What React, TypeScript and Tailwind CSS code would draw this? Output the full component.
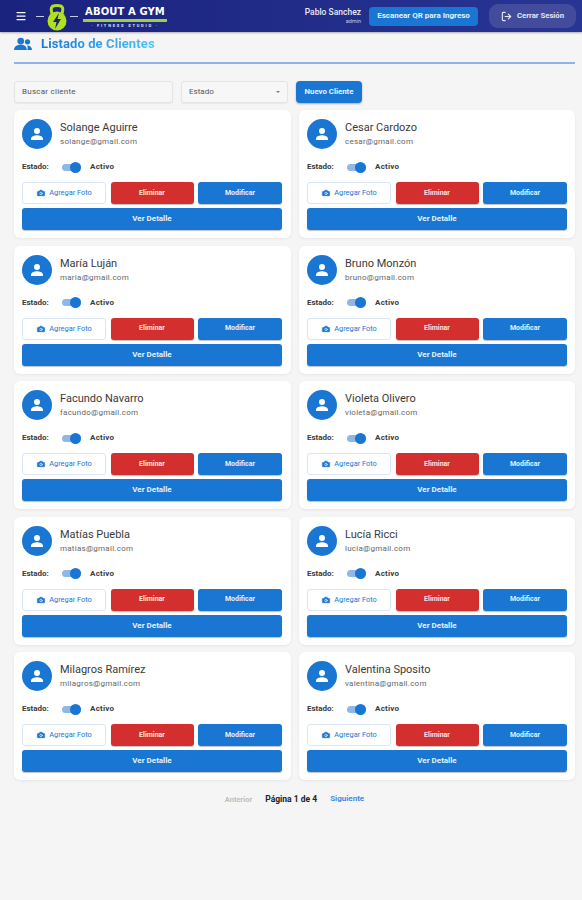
import { Camera, LogOut, Menu } from 'lucide-react';

const clients = [
  ['Solange Aguirre', 'solange@gmail.com'],
  ['Cesar Cardozo', 'cesar@gmail.com'],
  ['María Luján', 'maria@gmail.com'],
  ['Bruno Monzón', 'bruno@gmail.com'],
  ['Facundo Navarro', 'facundo@gmail.com'],
  ['Violeta Olivero', 'violeta@gmail.com'],
  ['Matías Puebla', 'matias@gmail.com'],
  ['Lucía Ricci', 'lucia@gmail.com'],
  ['Milagros Ramírez', 'milagros@gmail.com'],
  ['Valentina Sposito', 'valentina@gmail.com'],
];

function Logo() {
  return (
    <div className="flex items-center ml-[9px]">
      <span className="w-[8px] h-px bg-[#c5cae9] mr-[3px]" />
      <svg width="20" height="27" viewBox="0 0 20 27" className="mt-[3px]">
        <path d="M5.5 11 C2.500 3 5 1.500 10 1.500 C15 1.500 17.500 3 14.500 11" fill="none" stroke="#b2e01f" strokeWidth="3" />
        <circle cx="10" cy="17" r="9.500" fill="#b2e01f" />
        <path d="M12 9 L6 18 H9.500 L8 25 L14 15 H10.500 Z" fill="#1a237e" />
      </svg>
      <span className="w-[8px] h-px bg-[#c5cae9] ml-[3px]" />
      <div className="ml-[5px] mt-[3px] flex flex-col items-center w-[84px]">
        <span className="font-['DejaVu_Sans',sans-serif] text-[10px] leading-[12px] font-bold text-white tracking-[0.1px] whitespace-nowrap">ABOUT A GYM</span>
        <span className="w-full h-[3px] bg-[#a5cf3a] mt-[1px]" />
        <span className="text-[4px] leading-[7px] font-bold text-[#dfe3f5] tracking-[1.8px] whitespace-nowrap">· FITNESS STUDIO ·</span>
      </div>
    </div>
  );
}

function Header() {
  return (
    <header className="h-[32px] flex items-center bg-gradient-to-r from-[#1a237e] to-[#283593] pl-[15px] pr-[6px] shadow-[0_1px_2px_rgba(0,0,0,0.3)]">
      <Menu size={12} strokeWidth={2.5} className="text-white" />
      <Logo />
      <div className="ml-auto flex items-center">
        <div className="flex flex-col items-end mr-[8px]">
          <span className="text-[8.500px] leading-[10px] font-medium text-[#e8eaf6]">Pablo Sanchez</span>
          <span className="text-[5.500px] leading-[9px] text-[#c5cae9]">admin</span>
        </div>
        <button className="h-[19px] w-[109px] rounded-[4px] bg-[#1976d2] text-[8px] font-bold text-[#e3f2fd]">Escanear QR para Ingreso</button>
        <button className="ml-[11px] h-[24px] w-[87px] rounded-[9px] bg-[#434c9c] flex items-center justify-center gap-[5px] text-[7.700px] font-bold text-[#e3e6f5]">
          <LogOut size={11} strokeWidth={2.5} />
          Cerrar Sesión
        </button>
      </div>
    </header>
  );
}

function Toolbar() {
  return (
    <div className="flex items-center gap-[8px] mt-[17px]">
      <div className="w-[159px] h-[22px] rounded-[3px] border border-[#e4e4e4] bg-[#f7f7f7] flex items-center px-[7px] text-[8px] tracking-[0.25px] text-[#555] shadow-[0_1px_1px_rgba(0,0,0,0.05)]">
        Buscar cliente
      </div>
      <div className="w-[107px] h-[22px] rounded-[3px] border border-[#e4e4e4] bg-[#f7f7f7] flex items-center justify-between px-[7px] text-[8px] text-[#555] shadow-[0_1px_1px_rgba(0,0,0,0.05)]">
        Estado
        <span className="w-0 h-0 border-x-[2px] border-x-transparent border-t-[2px] border-t-[#777]" />
      </div>
      <button className="w-[66px] h-[22px] rounded-[4px] bg-[#1976d2] text-[7.800px] font-bold text-[#e3f2fd] shadow-[0_1px_2px_rgba(0,0,0,0.3)]">Nuevo Cliente</button>
    </div>
  );
}

function ClientCard({ name, email }: { name: string; email: string }) {
  return (
    <div className="h-[128px] rounded-[6px] bg-white px-[8px] pt-[9px] shadow-[0_1px_3px_rgba(0,0,0,0.07)]">
      <div className="flex items-center h-[30px]">
        <div className="w-[30px] h-[30px] rounded-full bg-[#1976d2] flex items-center justify-center">
          <svg width="16" height="16" viewBox="0 0 24 24" fill="#ffffff">
            <path d="M12 12a4.500 4.500 0 1 0 0-9 4.500 4.500 0 0 0 0 9Zm0 2c-3.300 0-9 1.700-9 5v2h18v-2c0-3.300-5.700-5-9-5Z" />
          </svg>
        </div>
        <div className="ml-[8px] flex flex-col pt-[1px]">
          <span className="text-[11px] leading-[14px] text-[#3a3a3a]">{name}</span>
          <span className="text-[8px] leading-[12px] mt-[1px] tracking-[0.25px] text-[#666]">{email}</span>
        </div>
      </div>
      <div className="flex items-center h-[14px] mt-[11px] font-bold text-[#3a3a3a]">
        <span className="w-[40px] text-[8px]">Estado:</span>
        <span className="relative w-[19px] h-[7px] rounded-full bg-[#8fb8e6]">
          <span className="absolute right-0 top-[-2px] w-[11px] h-[11px] rounded-full bg-[#1976d2]" />
        </span>
        <span className="ml-[9px] text-[8px] tracking-[0.25px]">Activo</span>
      </div>
      <div className="grid grid-cols-[84px_83px_84px] gap-x-[4.500px] mt-[8px]">
        <button className="h-[22px] rounded-[3px] border border-[#dbe6f5] bg-white flex items-center justify-center gap-[3px] text-[7.400px] text-[#1976d2]">
          <Camera size={10} fill="#1976d2" stroke="#ffffff" strokeWidth={1.5} />
          Agregar Foto
        </button>
        <button className="h-[22px] rounded-[3px] bg-[#d32f2f] text-[7px] font-bold text-[#fbe3e3] shadow-[0_1px_1px_rgba(0,0,0,0.25)]">Eliminar</button>
        <button className="h-[22px] rounded-[3px] bg-[#1976d2] text-[7px] font-bold text-[#e3f2fd] shadow-[0_1px_1px_rgba(0,0,0,0.25)]">Modificar</button>
      </div>
      <button className="w-[260px] h-[22px] mt-[4px] rounded-[3px] bg-[#1976d2] text-[8px] font-bold text-[#e3f2fd] shadow-[0_1px_1px_rgba(0,0,0,0.25)]">Ver Detalle</button>
    </div>
  );
}

export default function App() {
  return (
    <div className="min-h-[900px] bg-[#f5f5f5] font-['Roboto',sans-serif]">
      <Header />
      <main className="pl-[14px] pr-[7px]">
        <div className="flex items-center h-[24px] gap-[9px]">
          <svg width="18" height="14" viewBox="0 0 24 18" fill="#1976d2">
            <circle cx="9" cy="5" r="4.500" />
            <path d="M0 17c0-4.500 4-7 9-7s8 2.500 8 7Z" />
            <circle cx="18" cy="6" r="3.500" />
            <path d="M18 17h6c0-3.500-2.500-6-6.500-6 1 1.500.5 4 .5 6Z" />
          </svg>
          <h1 className="text-[13px] font-bold tracking-[0.1px] bg-gradient-to-r from-[#1976d2] to-[#4fc3f7] bg-clip-text text-transparent">Listado de Clientes</h1>
        </div>
        <div className="h-[2px] bg-[#8db4e8] mt-[6px]" />
        <Toolbar />
        <div className="grid grid-cols-[277px_276px] gap-x-[8px] gap-y-[7.500px] mt-[7px]">
          {clients.map(([name, email]) => (
            <ClientCard key={email} name={name} email={email} />
          ))}
        </div>
        <div className="flex items-center justify-center gap-[13px] mt-[13px] font-bold">
          <span className="text-[#bdbdbd] text-[7.500px]">Anterior</span>
          <span className="text-[#222] text-[8.500px]">Página 1 de 4</span>
          <span className="text-[#3f8ce0] text-[8px]">Siguiente</span>
        </div>
      </main>
    </div>
  );
}
